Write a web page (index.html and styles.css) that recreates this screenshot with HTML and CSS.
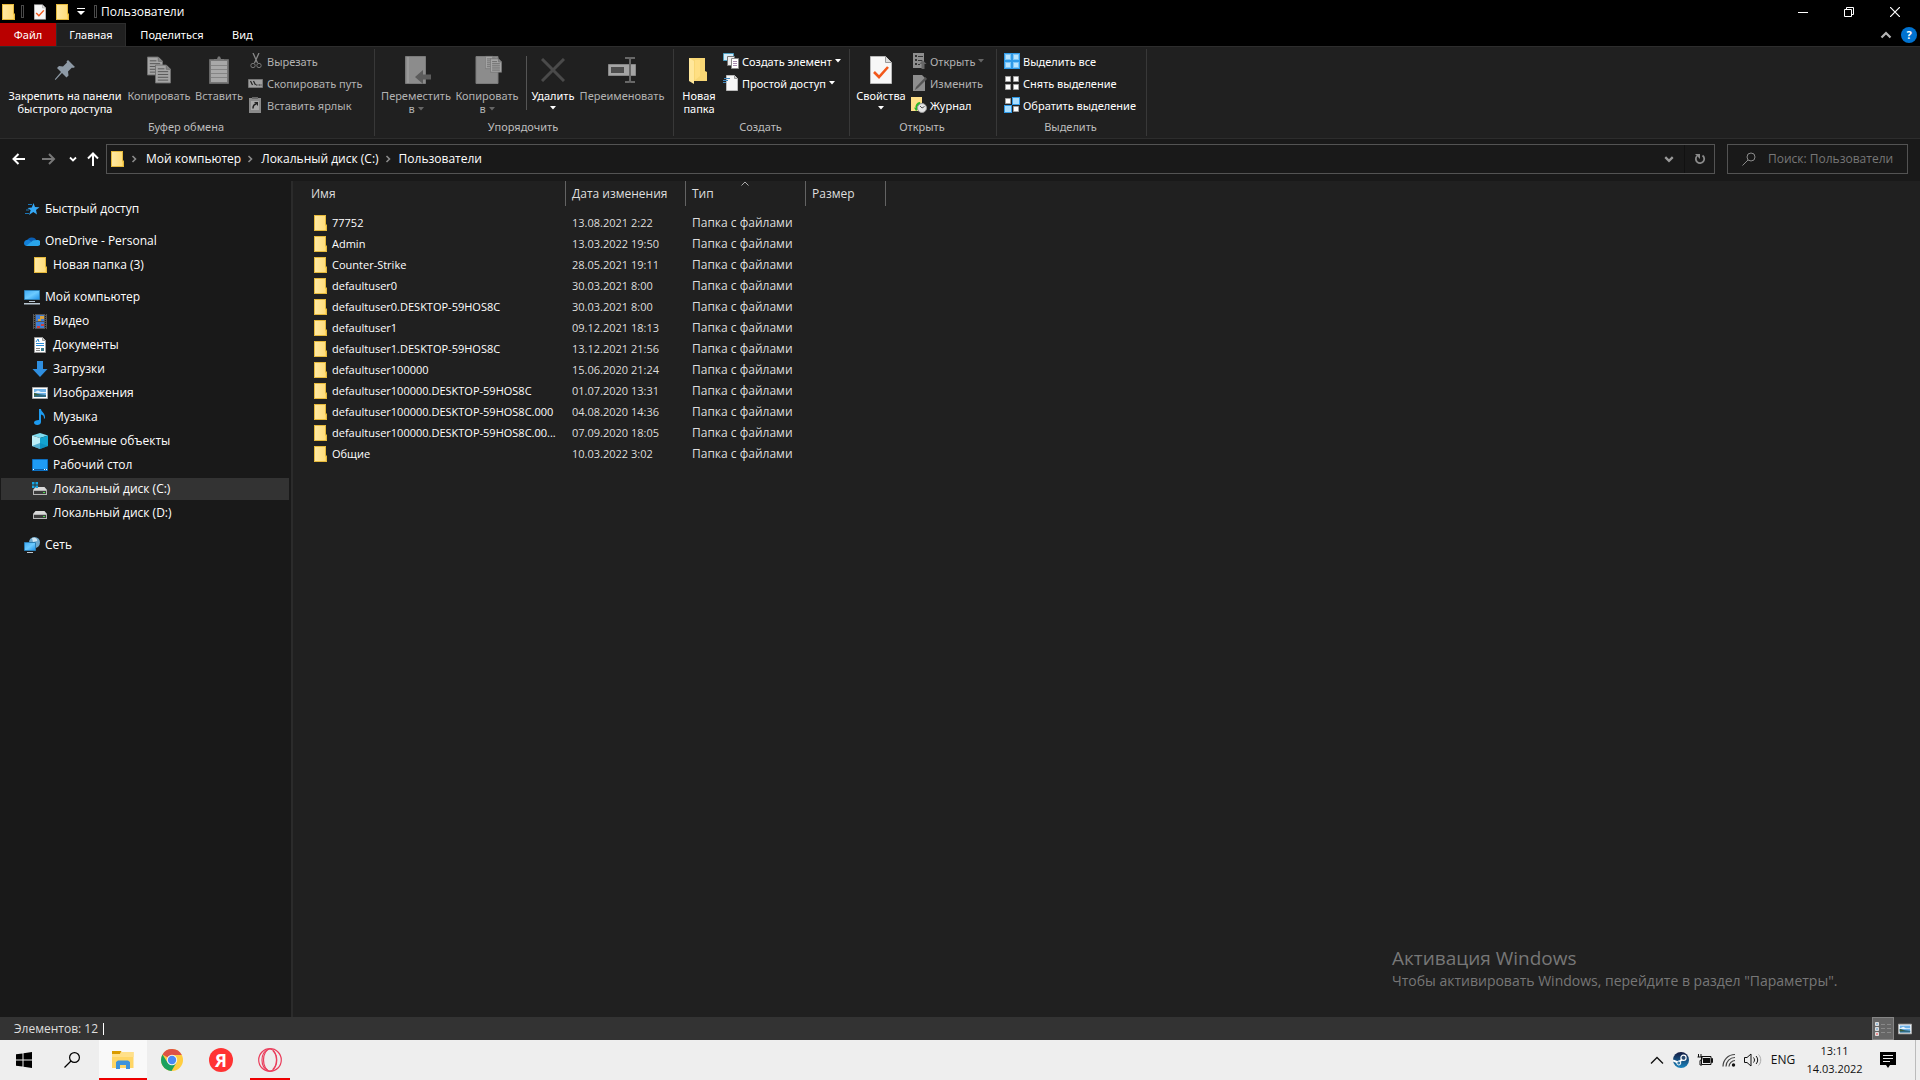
FILE: index.html
```html
<!DOCTYPE html>
<html lang="ru">
<head>
<meta charset="utf-8">
<title>Пользователи</title>
<link rel="stylesheet" href="styles.css">
</head>
<body>
<svg class="defs" aria-hidden="true">
  <defs>
    <linearGradient id="g-folder" x1="0" y1="0" x2="1" y2="0"><stop offset="0" stop-color="#ffe9a2"/><stop offset="1" stop-color="#ffdd7c"/></linearGradient>
    <linearGradient id="g-screen" x1="0" y1="0" x2="1" y2="1"><stop offset="0" stop-color="#3fa9f5"/><stop offset=".5" stop-color="#6ccbff"/><stop offset="1" stop-color="#1e90e8"/></linearGradient>
    <linearGradient id="g-steam" x1="0" y1="0" x2="0" y2="1"><stop offset="0" stop-color="#14193f"/><stop offset="1" stop-color="#1a86c0"/></linearGradient>
  </defs>
  <symbol id="folder" viewBox="0 0 16 16"><path d="M2 0h12v9.500h1V16H2z" fill="#e5b93c"/><path d="M3 1h10v14H3z" fill="url(#g-folder)"/><path d="M13 10.500h1V15h-1z" fill="#ffd55f"/></symbol>
  <symbol id="doc-check" viewBox="0 0 22 28"><path d="M.5.5h15l6 6v21H.5z" fill="#f7f7f7" stroke="#b8b8b8"/><path d="M15.500.5v6h6" fill="#ddd" stroke="#999"/><path d="M4 16l5 5 9-10" fill="none" stroke="#f2581b" stroke-width="2.600"/></symbol>
  <symbol id="chev-down" viewBox="0 0 8 8"><path d="M1 2.500l3 3 3-3" fill="none" stroke="currentColor" stroke-width="1.800"/></symbol>
  <symbol id="chev-up" viewBox="0 0 12 8"><path d="M1.500 6.500L6 2l4.500 4.500" fill="none" stroke="currentColor" stroke-width="2.200"/></symbol>
  <symbol id="crumb" viewBox="0 0 6 8"><path d="M1.500 1l3 3-3 3" fill="none" stroke="currentColor" stroke-width="1.600"/></symbol>
  <symbol id="caret" viewBox="0 0 6 4"><path d="M0 0h6L3 3.500z" fill="currentColor"/></symbol>
  <symbol id="sheet" viewBox="0 0 17 20"><path d="M.5.5h11.500l4.500 4.500v14.500H.5z" fill="#a5a5a5" stroke="#707070"/><path d="M12 .5V5h4.500" fill="#888" stroke="#707070"/><path d="M3 4.500h7M3 7.500h11M3 10.500h11M3 13.500h11M3 16.500h11" stroke="#555"/></symbol>
  <symbol id="tiles" viewBox="0 0 16 16"><path d="M1.500 1.500h5v5h-5zM9.500 1.500h5v5h-5zM1.500 9.500h5v5h-5zM9.500 9.500h5v5h-5z" fill="#fff" stroke="#a0a0a0"/></symbol>
  <symbol id="drive" viewBox="0 0 16 16"><path d="M3.500 6h9L15 9H1z" fill="#d9d9d9"/><path d="M1 9h14v5H1z" fill="#b5b5b5"/><path d="M2 10h12v3H2z" fill="#3c3c3c"/><path d="M11 11h2v1h-2z" fill="#4ddb4d"/></symbol>
  <symbol id="picture" viewBox="0 0 16 12"><path d="M.5.5h15v11H.5z" fill="#fff" stroke="#a8a8a8"/><path d="M2 2h12v8H2z" fill="#6fb1e6"/><path d="M2 5.500l4-2 3 1.500h5V6H2z" fill="#e7f3fb"/><path d="M2 6l5 1 7 1v2H2z" fill="#2f6a83"/><path d="M2 6l6 2-6 .5z" fill="#3c6137"/></symbol>
</svg>

<header class="titlebar">
  <svg class="i16"><use href="#folder"/></svg>
  <span class="grip"></span>
  <button class="qa" aria-label="Свойства"><svg width="12" height="16"><use href="#doc-check"/></svg></button>
  <button class="qa" aria-label="Новая папка"><svg class="i16"><use href="#folder"/></svg></button>
  <button class="qa qa-menu" aria-label="Настройка панели"><svg width="8" height="8" viewBox="0 0 8 8"><path d="M0 .5h8" stroke="#fff"/><path d="M0 3h8L4 7z" fill="#fff"/></svg></button>
  <span class="grip"></span>
  <h1 class="title">Пользователи</h1>
  <div class="window-buttons">
    <button aria-label="Свернуть"><svg width="10" height="10"><path d="M0 5.500h10" stroke="#fff"/></svg></button>
    <button aria-label="Восстановить"><svg width="10" height="10"><path d="M.5 2.500h7v7h-7zM2.500 2V.5h7v7H8" fill="none" stroke="#fff"/></svg></button>
    <button aria-label="Закрыть"><svg width="10" height="10"><path d="M0 0l10 10M10 0L0 10" stroke="#fff" stroke-width="1.200"/></svg></button>
  </div>
</header>

<nav class="tabs">
  <button class="tab tab-file">Файл</button>
  <button class="tab tab-active">Главная</button>
  <button class="tab tab-share">Поделиться</button>
  <button class="tab">Вид</button>
  <div class="tabs-end">
    <button aria-label="Свернуть ленту"><svg class="dim" width="12" height="8"><use href="#chev-up"/></svg></button>
    <button aria-label="Справка" class="help">?</button>
  </div>
</nav>

<section class="ribbon">
  <div class="group g-clip">
    <div class="tools">
      <button class="big w-pin"><span class="pic"><svg width="22" height="22" viewBox="0 0 22 22"><path d="M14 1l7 7-2 1-1-.5-4 4 .500 4-2 2-4.500-4.500L1.500 21 .8 20.300 7 13 3 9l2-2 4 .5 4-4L12.500 2.500z" fill="#8e9aa6"/></svg></span>Закрепить на панели<br>быстрого доступа</button>
      <button class="big w-copy" disabled><span class="pic"><svg width="24" height="28" viewBox="0 0 24 28"><svg width="16" height="20"><use href="#sheet"/></svg><svg x="8" y="8" width="16" height="20"><use href="#sheet"/></svg></svg></span>Копировать</button>
      <button class="big w-paste" disabled><span class="pic"><svg width="20" height="28" viewBox="0 0 20 28"><path d="M.5 3.500h19v24H.5z" fill="#777" stroke="#666"/><path d="M2 5h16v21H2z" fill="#a8a8a8"/><path d="M5 5V3h3l1-2.500h2L12 3h3v2z" fill="#777"/><path d="M2 9.500h16M2 13.500h16M2 17.500h16M2 21.500h16" stroke="#858585"/></svg></span>Вставить</button>
      <div class="stack">
        <button class="small" disabled><svg class="i16" viewBox="0 0 16 16"><path d="M5 0l4.500 10M11 0L6.500 10" stroke="#888" stroke-width="1.300" fill="none"/><circle cx="5" cy="12.500" r="2.200" fill="none" stroke="#777"/><circle cx="11" cy="12.500" r="2.200" fill="none" stroke="#777"/></svg>Вырезать</button>
        <button class="small" disabled><svg class="i16" viewBox="0 0 16 16"><path d="M.5 4.500h14v8H.5z" fill="#a0a0a0" stroke="#777"/><path d="M2.500 6l2 4M5.500 6l2 4M8 10h1.500M10.500 10H12M12.500 10h1" stroke="#222" stroke-width="1.200"/></svg>Скопировать путь</button>
        <button class="small" disabled><svg class="i16" viewBox="0 0 16 16"><path d="M1 1h12v15H1z" fill="#8a8a8a"/><path d="M4 0h6v2H4z" fill="#666"/><path d="M3 4h8v9H3z" fill="#a8a8a8"/><path d="M5 11.500c0-3 .5-4 3-4.500" fill="none" stroke="#222" stroke-width="1.500"/><path d="M6 5h4v4z" fill="#222"/></svg>Вставить ярлык</button>
      </div>
    </div>
    <div class="caption">Буфер обмена</div>
  </div>
  <div class="group g-org">
    <div class="tools">
      <button class="big w-move" disabled><span class="pic"><svg width="30" height="28" viewBox="-4 0 30 28"><path d="M.5.5h20v27H.5z" fill="#8c8c8c" stroke="#7a7a7a"/><path d="M2 1h2v26H2z" fill="#999"/><path d="M10 21l8-7v4.500h8v5h-8V28z" fill="#5c5c5c"/></svg></span>Переместить<br><span class="drop">в <svg width="6" height="4"><use href="#caret"/></svg></span></button>
      <button class="big w-copyto" disabled><span class="pic"><svg width="32" height="32" viewBox="-4 0 32 32"><path d="M1 2.500h22v27H1z" fill="#8c8c8c" stroke="#7a7a7a"/><svg x="10" y="1" width="11" height="15"><use href="#sheet"/></svg><svg x="15" y="4" width="12" height="15"><use href="#sheet"/></svg></svg></span>Копировать<br><span class="drop">в <svg width="6" height="4"><use href="#caret"/></svg></span></button>
      <span class="vline"></span>
      <button class="big w-del"><span class="pic"><svg width="24" height="24"><path d="M1 1l22 22M23 1L1 23" stroke="#4a4a4a" stroke-width="3"/></svg></span>Удалить<span class="drop-only"><svg width="6" height="4"><use href="#caret"/></svg></span></button>
      <button class="big w-ren" disabled><span class="pic"><svg width="28" height="26" viewBox="0 0 28 26"><path d="M.5 7.500h27v11H.5z" fill="#a5a5a5" stroke="#888"/><path d="M3 10h13v6H3z" fill="#4e4e4e"/><path d="M17 1h4l1 1 1-1h4M22 2v22M17 25h4l1-1 1 1h4" stroke="#686868" stroke-width="2" fill="none"/></svg></span>Переименовать</button>
    </div>
    <div class="caption">Упорядочить</div>
  </div>
  <div class="group g-new">
    <div class="tools">
      <button class="big w-new"><span class="pic"><svg width="20" height="28" viewBox="0 0 20 28"><path d="M0 2h16v13l2 1v9H3z" fill="#f8d775"/><path d="M0 2l5 3v23l-5-3z" fill="#ffe79b"/><path d="M6 4h5v16l-5 4z" fill="#ffdf83"/></svg></span>Новая<br>папка</button>
      <div class="stack">
        <button class="small"><svg class="i16" viewBox="0 0 16 16"><path d="M.5.5h10v7H.5z" fill="#d6ecf7" stroke="#4d9fc2"/><path d="M4.500 3.500h7v9h-7z" fill="#eee" stroke="#777"/><path d="M8.500 5.500h7v10h-7z" fill="#fff" stroke="#888"/><path d="M10 8.500h4M10 10.500h4M10 12.500h4" stroke="#a88bb0"/></svg>Создать элемент<svg width="6" height="4"><use href="#caret"/></svg></button>
        <button class="small"><svg class="i16" viewBox="0 0 16 16"><path d="M3.500.5h8l3 3v12h-11z" fill="#f7f7f7" stroke="#bbb"/><path d="M11.500.5v3h3" fill="#ccc" stroke="#999"/><path d="M1 3.500h6M0 5.500h5M0 7.500h3" stroke="#3f87bd"/></svg>Простой доступ<svg width="6" height="4"><use href="#caret"/></svg></button>
      </div>
    </div>
    <div class="caption">Создать</div>
  </div>
  <div class="group g-open">
    <div class="tools">
      <button class="big w-prop"><span class="pic"><svg width="22" height="28"><use href="#doc-check"/></svg></span>Свойства<span class="drop-only"><svg width="6" height="4"><use href="#caret"/></svg></span></button>
      <div class="stack">
        <button class="small" disabled><svg class="i16" viewBox="0 0 16 16"><path d="M2 0h11v15H2z" fill="#8e8e8e"/><path d="M4 2h2v2H4zM4 6h2v2H4zM4 10h2v2H4zM7 3h5v1H7zM7 7h4v1H7zM7 11h2v1H7z" fill="#333"/><path d="M11.500 7l4 4h-2v5h-3v-5h-2z" fill="#666"/></svg>Открыть<svg width="6" height="4"><use href="#caret"/></svg></button>
        <button class="small" disabled><svg class="i16" viewBox="0 0 16 16"><path d="M2 0h9l3 3v13H2z" fill="#8e8e8e"/><path d="M14.500 2L16 4 7 13l-3 2 1-3z" fill="#555"/></svg>Изменить</button>
        <button class="small"><svg class="i16" viewBox="0 0 16 16"><path d="M0 0h11v14H0z" fill="#ffe08a"/><path d="M9 5A5 5 0 0 0 4.500 11L3 10.500 5 14l3-2.500-1.500-.2C6.500 9 8 8 10 8z" fill="#28b428"/><circle cx="11" cy="11" r="4.500" fill="#e6e6e6" stroke="#999"/><path d="M9 9l2 2 2.500-1.500" stroke="#555" fill="none"/></svg>Журнал</button>
      </div>
    </div>
    <div class="caption">Открыть</div>
  </div>
  <div class="group g-sel">
    <div class="tools">
      <div class="stack">
        <button class="small"><svg class="i16" viewBox="0 0 16 16"><path d="M0 0h16v16H0z" fill="#2f9ae8"/><path d="M1 1h6v6H1zM9 1h6v6H9zM1 9h6v6H1zM9 9h6v6H9z" fill="#7cc6f8"/><path d="M2 2h4v4H2zM10 2h4v4h-4zM2 10h4v4H2zM10 10h4v4h-4z" fill="#b8e4ff"/></svg>Выделить все</button>
        <button class="small"><svg class="i16"><use href="#tiles"/></svg>Снять выделение</button>
        <button class="small"><svg class="i16" viewBox="0 0 16 16"><use href="#tiles"/><path d="M8 0h8v8H8zM0 8h8v8H0z" fill="#2f9ae8"/><path d="M9 1h6v6H9zM1 9h6v6H1z" fill="#a9deff"/></svg>Обратить выделение</button>
      </div>
    </div>
    <div class="caption">Выделить</div>
  </div>
</section>

<section class="navbar">
  <button class="nav-btn" aria-label="Назад"><svg width="14" height="12"><path d="M13 6H2M6.500 1L1.500 6l5 5" fill="none" stroke="#fff" stroke-width="2"/></svg></button>
  <button class="nav-btn" aria-label="Вперед"><svg width="14" height="12"><path d="M0 6h11M7 1l5 5-5 5" fill="none" stroke="#777" stroke-width="2"/></svg></button>
  <button class="nav-hist" aria-label="Последние расположения"><svg width="8" height="8"><use href="#chev-down"/></svg></button>
  <button class="nav-up" aria-label="Вверх"><svg width="12" height="14"><path d="M6 14V2M1 6.500l5-5 5 5" fill="none" stroke="#fff" stroke-width="2"/></svg></button>
  <div class="address">
    <svg class="i16"><use href="#folder"/></svg>
    <svg class="sep" width="6" height="8"><use href="#crumb"/></svg>
    <a href="#pc">Мой компьютер</a>
    <svg class="sep" width="6" height="8"><use href="#crumb"/></svg>
    <a href="#c">Локальный диск (C:)</a>
    <svg class="sep" width="6" height="8"><use href="#crumb"/></svg>
    <a href="#users">Пользователи</a>
    <button class="addr-drop" aria-label="Предыдущие расположения"><svg width="10" height="10"><use href="#chev-down"/></svg></button>
    <button class="addr-refresh" aria-label="Обновить"><svg width="12" height="12" viewBox="0 0 12 12"><path d="M8.500 2.500A4.200 4.200 0 1 1 3 3" fill="none" stroke="#8a8a8a" stroke-width="1.800"/><path d="M1 1h5v5z" fill="#8a8a8a"/></svg></button>
  </div>
  <label class="search"><svg width="14" height="14" viewBox="0 0 14 14"><circle cx="9" cy="5" r="4" fill="none" stroke="#8a8a8a"/><path d="M6 8l-5.500 5.500" stroke="#8a8a8a"/></svg><input type="search" placeholder="Поиск: Пользователи" aria-label="Поиск"></label>
</section>

<div class="content">
  <aside class="tree">
    <div class="branch">
      <a href="#quick" class="node"><svg class="i16" viewBox="0 0 16 16"><path d="M9.500 2l1.500 4 4.500.2-3.500 2.800 1 4.500-3.700-2.500L5 14l1.700-4.800L3.500 7l4.300-.5z" fill="#35a8f5"/><path d="M4 3.500h4M2 9h3M1 12.500h4" stroke="#1976b8"/></svg>Быстрый доступ</a>
    </div>
    <div class="branch">
      <a href="#onedrive" class="node"><svg class="i16" viewBox="0 0 16 16"><path d="M3 8a5 4.700 0 0 1 9.500-.5L9 11z" fill="#0a5fb4"/><path d="M0 10a3.500 3.500 0 0 1 5-3l6 5-8 1A3 3 0 0 1 0 10z" fill="#1380d8"/><path d="M2 13l7-5.500 4-.5a3 3 0 0 1 1 6z" fill="#2aa5ea"/></svg>OneDrive - Personal</a>
      <a href="#nf3" class="node sub"><svg class="i16"><use href="#folder"/></svg>Новая папка (3)</a>
    </div>
    <div class="branch">
      <a href="#pc" class="node"><svg class="i16" viewBox="0 0 16 16"><path d="M.5 1.500h15v9H.5z" fill="url(#g-screen)" stroke="#2b7fb5"/><path d="M5 12h6v1H5zM0 14h16v1.500H0z" fill="#b9c7d2"/></svg>Мой компьютер</a>
      <a href="#video" class="node sub"><svg class="i16" viewBox="0 0 16 16"><path d="M1 1h14v15H1z" fill="#555"/><path d="M2.500 1v15M13.500 1v15" stroke="#1a1a1a" stroke-dasharray="1 1"/><path d="M4 2h8v6H4zM4 9h8v6H4z" fill="#3f7fd6"/><path d="M8 3h4v3H8zM6 6h3v2H6z" fill="#d9a13c"/><path d="M9 11h3v2H9zM5 13h3v2H5z" fill="#c94040"/></svg>Видео</a>
      <a href="#docs" class="node sub"><svg class="i16" viewBox="0 0 16 16"><path d="M2.500.5h8l3 3v12h-11z" fill="#fff" stroke="#999"/><path d="M4 6.500h8M4 8.500h8M4 5l2-3 1 3" stroke="#2a8ad4" fill="none"/><path d="M4 11.500h4M4 13.500h4" stroke="#888"/><path d="M9 11h3v3H9z" fill="#3d7d8f"/><path d="M10.500.5v3h3" fill="#ccc" stroke="#999"/></svg>Документы</a>
      <a href="#down" class="node sub"><svg class="i16" viewBox="0 0 16 16"><path d="M5 0h6v8h4.500L8 16 .5 8H5z" fill="#2f8fe0"/></svg>Загрузки</a>
      <a href="#pics" class="node sub"><svg width="16" height="12"><use href="#picture"/></svg>Изображения</a>
      <a href="#music" class="node sub"><svg class="i16" viewBox="0 0 16 16"><path d="M7 0h2c0 3 4.500 4 4 9l-1 1c.2-3-1-4-3-4.500V13c0 2-1.700 3-3.700 3S2 15 2 13.500 4 11 7 11z" fill="#1d9bf0"/></svg>Музыка</a>
      <a href="#3d" class="node sub"><svg class="i16" viewBox="0 0 16 16"><path d="M8 0l8 2.500L8 5 0 2.500z" fill="#7fdcf0"/><path d="M0 2.500L8 5v11l-8-3z" fill="#bdeef7"/><path d="M16 2.500L8 5v11l8-3z" fill="#13a3cf"/><path d="M0 13l8-3 8 3-8 3z" fill="#0b86b8" opacity=".6"/></svg>Объемные объекты</a>
      <a href="#desk" class="node sub"><svg class="i16" viewBox="0 0 16 16"><path d="M.5 2.500h15v11H.5z" fill="#1e9bf5" stroke="#0d6fc0"/><path d="M1 12.500h14" stroke="#0b5ea8"/><path d="M1 12h1v1H1zM12 12h1v1h-1zM14 12h1v1h-1z" fill="#fff"/></svg>Рабочий стол</a>
      <a href="#c" class="node sub current"><svg class="i16" viewBox="0 0 16 16"><use href="#drive"/><path d="M0 1h2.500v2.500H0zM3.500 1H6v2.500H3.500zM0 4.500h2.500V7H0zM3.500 4.500H6V7H3.500z" fill="#16a8e8"/></svg>Локальный диск (C:)</a>
      <a href="#d" class="node sub"><svg class="i16"><use href="#drive"/></svg>Локальный диск (D:)</a>
    </div>
    <div class="branch">
      <a href="#net" class="node"><svg class="i16" viewBox="0 0 16 16"><circle cx="10.500" cy="5.500" r="5.500" fill="#6fa8cc"/><path d="M8 1c3-1 6 1 5 3L9 5z" fill="#cfe6f3"/><path d="M.5 5.500h11v8H.5z" fill="url(#g-screen)" stroke="#2b7fb5"/><path d="M3 15h6v1H3z" fill="#b9c7d2"/></svg>Сеть</a>
    </div>
  </aside>

  <main class="files">
    <table>
      <colgroup><col class="c-name"><col class="c-date"><col class="c-type"><col class="c-size"></colgroup>
      <thead>
        <tr><th>Имя</th><th>Дата изменения</th><th class="sorted">Тип<svg class="sort-mark" width="8" height="5"><path d="M.5 4.500L4 1l3.500 3.500" fill="none" stroke="#aaa"/></svg></th><th>Размер</th></tr>
      </thead>
      <tbody>
        <tr><td><svg class="i16"><use href="#folder"/></svg>77752</td><td>13.08.2021 2:22</td><td>Папка с файлами</td><td></td></tr>
        <tr><td><svg class="i16"><use href="#folder"/></svg>Admin</td><td>13.03.2022 19:50</td><td>Папка с файлами</td><td></td></tr>
        <tr><td><svg class="i16"><use href="#folder"/></svg>Counter-Strike</td><td>28.05.2021 19:11</td><td>Папка с файлами</td><td></td></tr>
        <tr><td><svg class="i16"><use href="#folder"/></svg>defaultuser0</td><td>30.03.2021 8:00</td><td>Папка с файлами</td><td></td></tr>
        <tr><td><svg class="i16"><use href="#folder"/></svg>defaultuser0.DESKTOP-59HOS8C</td><td>30.03.2021 8:00</td><td>Папка с файлами</td><td></td></tr>
        <tr><td><svg class="i16"><use href="#folder"/></svg>defaultuser1</td><td>09.12.2021 18:13</td><td>Папка с файлами</td><td></td></tr>
        <tr><td><svg class="i16"><use href="#folder"/></svg>defaultuser1.DESKTOP-59HOS8C</td><td>13.12.2021 21:56</td><td>Папка с файлами</td><td></td></tr>
        <tr><td><svg class="i16"><use href="#folder"/></svg>defaultuser100000</td><td>15.06.2020 21:24</td><td>Папка с файлами</td><td></td></tr>
        <tr><td><svg class="i16"><use href="#folder"/></svg>defaultuser100000.DESKTOP-59HOS8C</td><td>01.07.2020 13:31</td><td>Папка с файлами</td><td></td></tr>
        <tr><td><svg class="i16"><use href="#folder"/></svg>defaultuser100000.DESKTOP-59HOS8C.000</td><td>04.08.2020 14:36</td><td>Папка с файлами</td><td></td></tr>
        <tr><td><svg class="i16"><use href="#folder"/></svg>defaultuser100000.DESKTOP-59HOS8C.00...</td><td>07.09.2020 18:05</td><td>Папка с файлами</td><td></td></tr>
        <tr><td><svg class="i16"><use href="#folder"/></svg>Общие</td><td>10.03.2022 3:02</td><td>Папка с файлами</td><td></td></tr>
      </tbody>
    </table>
    <div class="watermark">
      <p class="wm-title">Активация Windows</p>
      <p class="wm-text">Чтобы активировать Windows, перейдите в раздел "Параметры".</p>
    </div>
  </main>
</div>

<footer class="status">
  <span class="count">Элементов: 12</span>
  <div class="views">
    <button class="view view-on" aria-label="Таблица"><svg width="16" height="14" viewBox="0 0 16 14"><path d="M.5.5h3v3h-3zM.5 5.500h3v3h-3zM.5 10.500h3v3h-3z" fill="#fff" stroke="#ddd"/><path d="M1 2h2M1 7h2" stroke="#3a7fb5"/><path d="M1 12h2" stroke="#d22"/><path d="M6 2.500h4M12 2.500h4M6 6.500h4M12 6.500h4M6 10.500h4M12 10.500h4" stroke="#888"/></svg></button>
    <button class="view" aria-label="Эскизы"><svg width="14" height="12"><use href="#picture"/></svg></button>
  </div>
</footer>

<div class="taskbar">
  <button class="task" aria-label="Пуск"><svg class="i16" viewBox="0 0 16 16"><path d="M0 2.300l6.500-.9v6.100H0zM7.500 1.200L16 0v7.500H7.500zM0 8.500h6.500v6.100L0 13.700zM7.500 8.500H16V16l-8.500-1.200z" fill="#000"/></svg></button>
  <button class="task" aria-label="Поиск"><svg class="i16" viewBox="0 0 16 16"><circle cx="10.500" cy="5.500" r="4.900" fill="none" stroke="#000" stroke-width="1.200"/><path d="M7 9L.5 15.500" stroke="#000" stroke-width="1.300"/></svg></button>
  <div class="running">
    <button class="task active" aria-label="Проводник"><svg width="22" height="18" viewBox="0 0 22 18"><path d="M0 0h9l1 2v3H0z" fill="#d99b00"/><path d="M0 3h8l1-2h12.500v16H0z" fill="#ffd666"/><path d="M0 3h8l1-2h12.500v5H0z" fill="#ffe08a"/><path d="M4 18v-7l2-1.500h10L18 11v7h-4v-4H8v4z" fill="#3d93dc"/></svg></button>
    <button class="task" aria-label="Chrome"><svg width="24" height="24" viewBox="0 0 24 24"><circle cx="12" cy="12" r="11" fill="#ffcd40"/><path d="M12 12L2.500 6.500A11 11 0 0 1 21.800 7H12z" fill="#de5246"/><path d="M2.500 6.500A11 11 0 0 0 11.500 23L16.500 14.500 12 12 7.500 14.500z" fill="#1aa15f"/><circle cx="12" cy="12" r="5.200" fill="#f5f5f5"/><circle cx="12" cy="12" r="4.200" fill="#4a8af4"/></svg></button>
    <button class="task" aria-label="Яндекс"><span class="ya">Я</span></button>
    <button class="task open" aria-label="Opera"><svg width="24" height="24" viewBox="0 0 24 24" fill="none" stroke="#ea3e5c" stroke-width="1.200"><circle cx="12" cy="12" r="11.300"/><ellipse cx="12" cy="12" rx="6.500" ry="11"/><path d="M10 1.500C2 5 2 19 10 22.500M15 3c5 4 5 14 0 18"/></svg></button>
  </div>
  <div class="tray">
    <button aria-label="Скрытые значки"><svg width="14" height="8"><path d="M1 7.500L7 1.500l6 6" fill="none" stroke="#111" stroke-width="1.300"/></svg></button>
    <button aria-label="Steam"><svg class="i16" viewBox="0 0 16 16"><circle cx="8" cy="8" r="8" fill="url(#g-steam)"/><path d="M0 8.500l5 2L10 7" stroke="#fff" stroke-width="2" fill="none"/><circle cx="10.500" cy="5.800" r="2.600" fill="#28486e" stroke="#fff" stroke-width="1.200"/><circle cx="5.800" cy="11" r="2" fill="#3a7ca8" stroke="#fff"/></svg></button>
    <button aria-label="Батарея"><svg width="16" height="12" viewBox="0 0 16 12"><path d="M4.500 2.500h9.500v8H4.500zM14.500 4.500h1v4h-1z" fill="none" stroke="#111"/><path d="M6 4h7v5H6z" fill="#111"/><path d="M1.500 0v3M4 0v3M.5 3h4.500v2.500l-2 1V11h2" stroke="#111" fill="none"/></svg></button>
    <button aria-label="Сеть"><svg width="14" height="14" viewBox="0 0 14 14"><path d="M1 13.500C1 7 6 1.500 13 1.500M4 13.500C4 8.500 8 4.500 13 4.500M7 13.500c0-3 3-6 6-6" fill="none" stroke="#444" stroke-width="1.200"/><circle cx="11.500" cy="12" r="1.700" fill="#111"/></svg></button>
    <button aria-label="Громкость"><svg width="18" height="14" viewBox="0 0 18 14"><path d="M.5 4.500h2.500l4-3.500v12L3 9.500H.5z" fill="none" stroke="#111"/><path d="M9.500 4.500c1.300 1.500 1.300 3.500 0 5M12 3c2.200 2.500 2.200 5.500 0 8" fill="none" stroke="#111"/><path d="M14.500 1.500c3 3 3 8 0 11" fill="none" stroke="#aaa"/></svg></button>
    <button class="lang">ENG</button>
    <button class="clock">13:11<br>14.03.2022</button>
    <button class="note" aria-label="Уведомления"><svg width="16" height="16" viewBox="0 0 16 16"><path d="M0 0h16v13h-6l-2 3-2-3H0z" fill="#000"/><path d="M3 3.500h10M3 6.500h10M3 9.500h7" stroke="#eee"/></svg></button>
  </div>
</div>
</body>
</html>
```
FILE: styles.css
```css
* { box-sizing: border-box; }

body {
  margin: 0;
  min-height: 100vh;
  display: flex;
  flex-direction: column;
  background: #202020;
  color: #fff;
  font: 12px/16px "Open Sans", "Noto Sans", sans-serif;
}

h1, p { margin: 0; font-weight: 400; }
button { margin: 0; padding: 0; border: 0; background: none; color: inherit; font: inherit; }
a { color: inherit; text-decoration: none; }
svg { flex: none; display: block; }
.defs { position: absolute; width: 0; height: 0; }
.i16 { width: 16px; height: 16px; }
.dim { color: #b5b5b5; }

/* Title bar */
.titlebar { display: flex; align-items: center; height: 23px; background: #000; }
.grip { width: 3px; height: 13px; margin: 0 5px; border: 1px solid #4a4a4a; }
.qa { display: flex; justify-content: center; width: 22px; }
.qa-menu { width: 16px; }
.title { margin-left: -1px; font-size: 12px; line-height: 22px; }
.window-buttons { display: flex; margin-left: auto; padding-right: 2px; }
.window-buttons button { display: flex; justify-content: center; align-items: center; width: 46px; height: 20px; }

/* Ribbon tabs */
.tabs { display: flex; height: 23px; background: #000; font-family: "Noto Sans", sans-serif; font-size: 11px; }
.tab { padding: 0 14px; }
.tab-file { width: 56px; padding: 0; background: #b90000; }
.tab-active { width: 70px; padding: 0; background: #202020; border: 1px solid #2d2d2d; border-bottom: 0; }
.tab-share { width: 92px; }
.tabs-end { display: flex; align-items: center; gap: 9px; margin-left: auto; padding-right: 3px; }
.help { width: 16px; height: 16px; border-radius: 50%; background: #0072d0; font-weight: 700; line-height: 16px; }

/* Ribbon */
.ribbon { display: flex; height: 93px; padding-top: 2px; border-top: 1px solid #2d2d2d; border-bottom: 1px solid #2d2d2d; font-family: "Noto Sans", sans-serif; font-size: 11px; line-height: 13px; }
.group { display: flex; flex-direction: column; border-right: 1px solid #383838; margin-bottom: 2px; }
.tools { display: flex; height: 74px; }
.caption { padding-right: 2px; text-align: center; color: #bdbdbd; line-height: 18px; }
.g-clip { width: 375px; }
.g-org { width: 299px; }
.g-new { width: 176px; }
.g-open { width: 147px; }
.g-sel { width: 150px; }
.g-clip .tools { padding-left: 4px; }
.g-org .tools { padding-left: 6px; }
.g-new .tools { padding-left: 3px; }
.g-open .tools, .g-sel .tools { padding-left: 5px; }
.big { display: block; flex: none; padding-top: 4px; text-align: center; white-space: nowrap; align-self: flex-start; }
.pic { display: flex; align-items: center; justify-content: center; height: 33px; margin-bottom: 3px; }
.w-pin { width: 122px; }
.w-copy { width: 66px; }
.w-paste { width: 54px; }
.w-move { width: 70px; }
.w-copyto { width: 72px; }
.w-del { width: 46px; }
.w-ren { width: 92px; }
.w-new { width: 44px; }
.w-prop { width: 52px; }
.big:disabled, .small:disabled { color: #b2b2b2; }
.drop { display: flex; justify-content: center; align-items: center; gap: 3px; }
.drop svg, .small:disabled svg:last-child { color: #666; }
.drop-only { display: flex; justify-content: center; padding-top: 4px; }
.vline { width: 1px; height: 54px; margin: 7px 3px 0; background: #555; }
.stack { display: flex; flex-direction: column; padding: 1px 0 0 2px; }
.g-open .stack { padding-left: 4px; }
.small { display: flex; align-items: center; gap: 3px; height: 22px; white-space: nowrap; }

/* Navigation bar */
.navbar { display: flex; align-items: center; padding: 5px 12px 7px 12px; background: #191919; }
.navbar > button { display: flex; flex: none; }
.nav-btn { width: 30px; }
.nav-hist { width: 15px; margin-left: -3px; }
.nav-up { width: 22px; padding-left: 3px; }
.address { display: flex; flex: 1; align-items: center; height: 30px; padding-left: 2px; border: 1px solid #535353; }
.address a { margin: 0 6px 0 8px; white-space: nowrap; }
.address .sep { color: #8a8a8a; }
.address .i16 + .sep { margin: 0 1px 0 6px; }
.addr-drop { display: flex; justify-content: center; width: 30px; margin-left: auto; color: #999; }
.addr-refresh { display: flex; align-items: center; justify-content: center; align-self: stretch; width: 30px; border-left: 1px solid #111; }
.search { display: flex; align-items: center; gap: 12px; width: 181px; height: 30px; margin-left: 12px; padding-left: 14px; border: 1px solid #535353; }
.search input { flex: 1; min-width: 0; padding: 0; border: 0; background: none; color: #fff; font: inherit; outline: 0; }
.search input::placeholder { color: #777; opacity: 1; }

/* Content */
.content { display: flex; flex: 1; }
.tree { flex: none; width: 293px; padding-top: 17px; background: #191919; border-right: 2px solid #2b2b2b; }
.branch { margin-bottom: 10px; }
.node { display: flex; align-items: center; gap: 5px; height: 22px; margin: 0 2px 2px 1px; padding-left: 23px; }
.sub { padding-left: 31px; }
.current { background: #333; }
.files { position: relative; flex: 1; }
table { width: 593px; table-layout: fixed; border-collapse: separate; border-spacing: 0; }
.c-name { width: 273px; }
.c-date, .c-type { width: 120px; }
.c-size { width: 80px; }
th { position: relative; height: 25px; padding: 0 0 0 6px; border-right: 1px solid #636363; color: #dedede; font-weight: 400; text-align: left; }
th:first-child { padding-left: 18px; }
.sort-mark { position: absolute; top: 0; left: 55px; }
thead::after { content: ""; display: block; height: 6px; }
td { height: 21px; padding: 0 0 0 6px; color: #dedede; white-space: nowrap; }
td:first-child { display: flex; align-items: center; gap: 4px; padding-left: 19px; color: #fff; font-size: 11px; }
td:nth-child(2) { font-size: 11px; }
.watermark { position: absolute; right: 20px; bottom: 26px; width: 508px; color: #777; }
.wm-title { font-size: 19px; line-height: 26px; }
.wm-text { font-size: 14px; line-height: 20px; }

/* Status bar */
.status { display: flex; align-items: center; height: 23px; padding-left: 14px; background: #333; color: #dedede; }
.count { padding-right: 5px; border-right: 1px solid #fff; line-height: 12px; }
.views { display: flex; align-self: stretch; margin-left: auto; padding-right: 4px; }
.view { display: flex; align-items: center; justify-content: center; width: 22px; }
.view-on { background: #666; border: 1px solid #858585; }

/* Taskbar */
.taskbar { display: flex; height: 40px; background: #eee; color: #111; }
.task { display: flex; align-items: center; justify-content: center; width: 48px; border-bottom: 2px solid transparent; border-top: 2px solid transparent; }
.running { display: flex; gap: 1px; margin-left: 3px; }
.active { background: #f9f9f9; border-color: #f9f9f9 #f9f9f9 #e00; }
.open { width: 40px; margin: 0 4px; border-bottom-color: #e00; }
.ya { width: 24px; height: 24px; border-radius: 50%; background: #f33; color: #fff; font-size: 18px; line-height: 24px; font-weight: 700; }
.tray { display: flex; align-items: center; margin-left: auto; padding-right: 4px; }
.tray button { display: flex; justify-content: center; width: 24px; }
.tray .lang { width: 36px; }
.tray .clock { display: block; width: 67px; text-align: center; font-size: 11px; line-height: 18px; }
.tray .note { width: 48px; padding-right: 8px; border-right: 1px solid #bbb; height: 40px; align-items: center; }
```
